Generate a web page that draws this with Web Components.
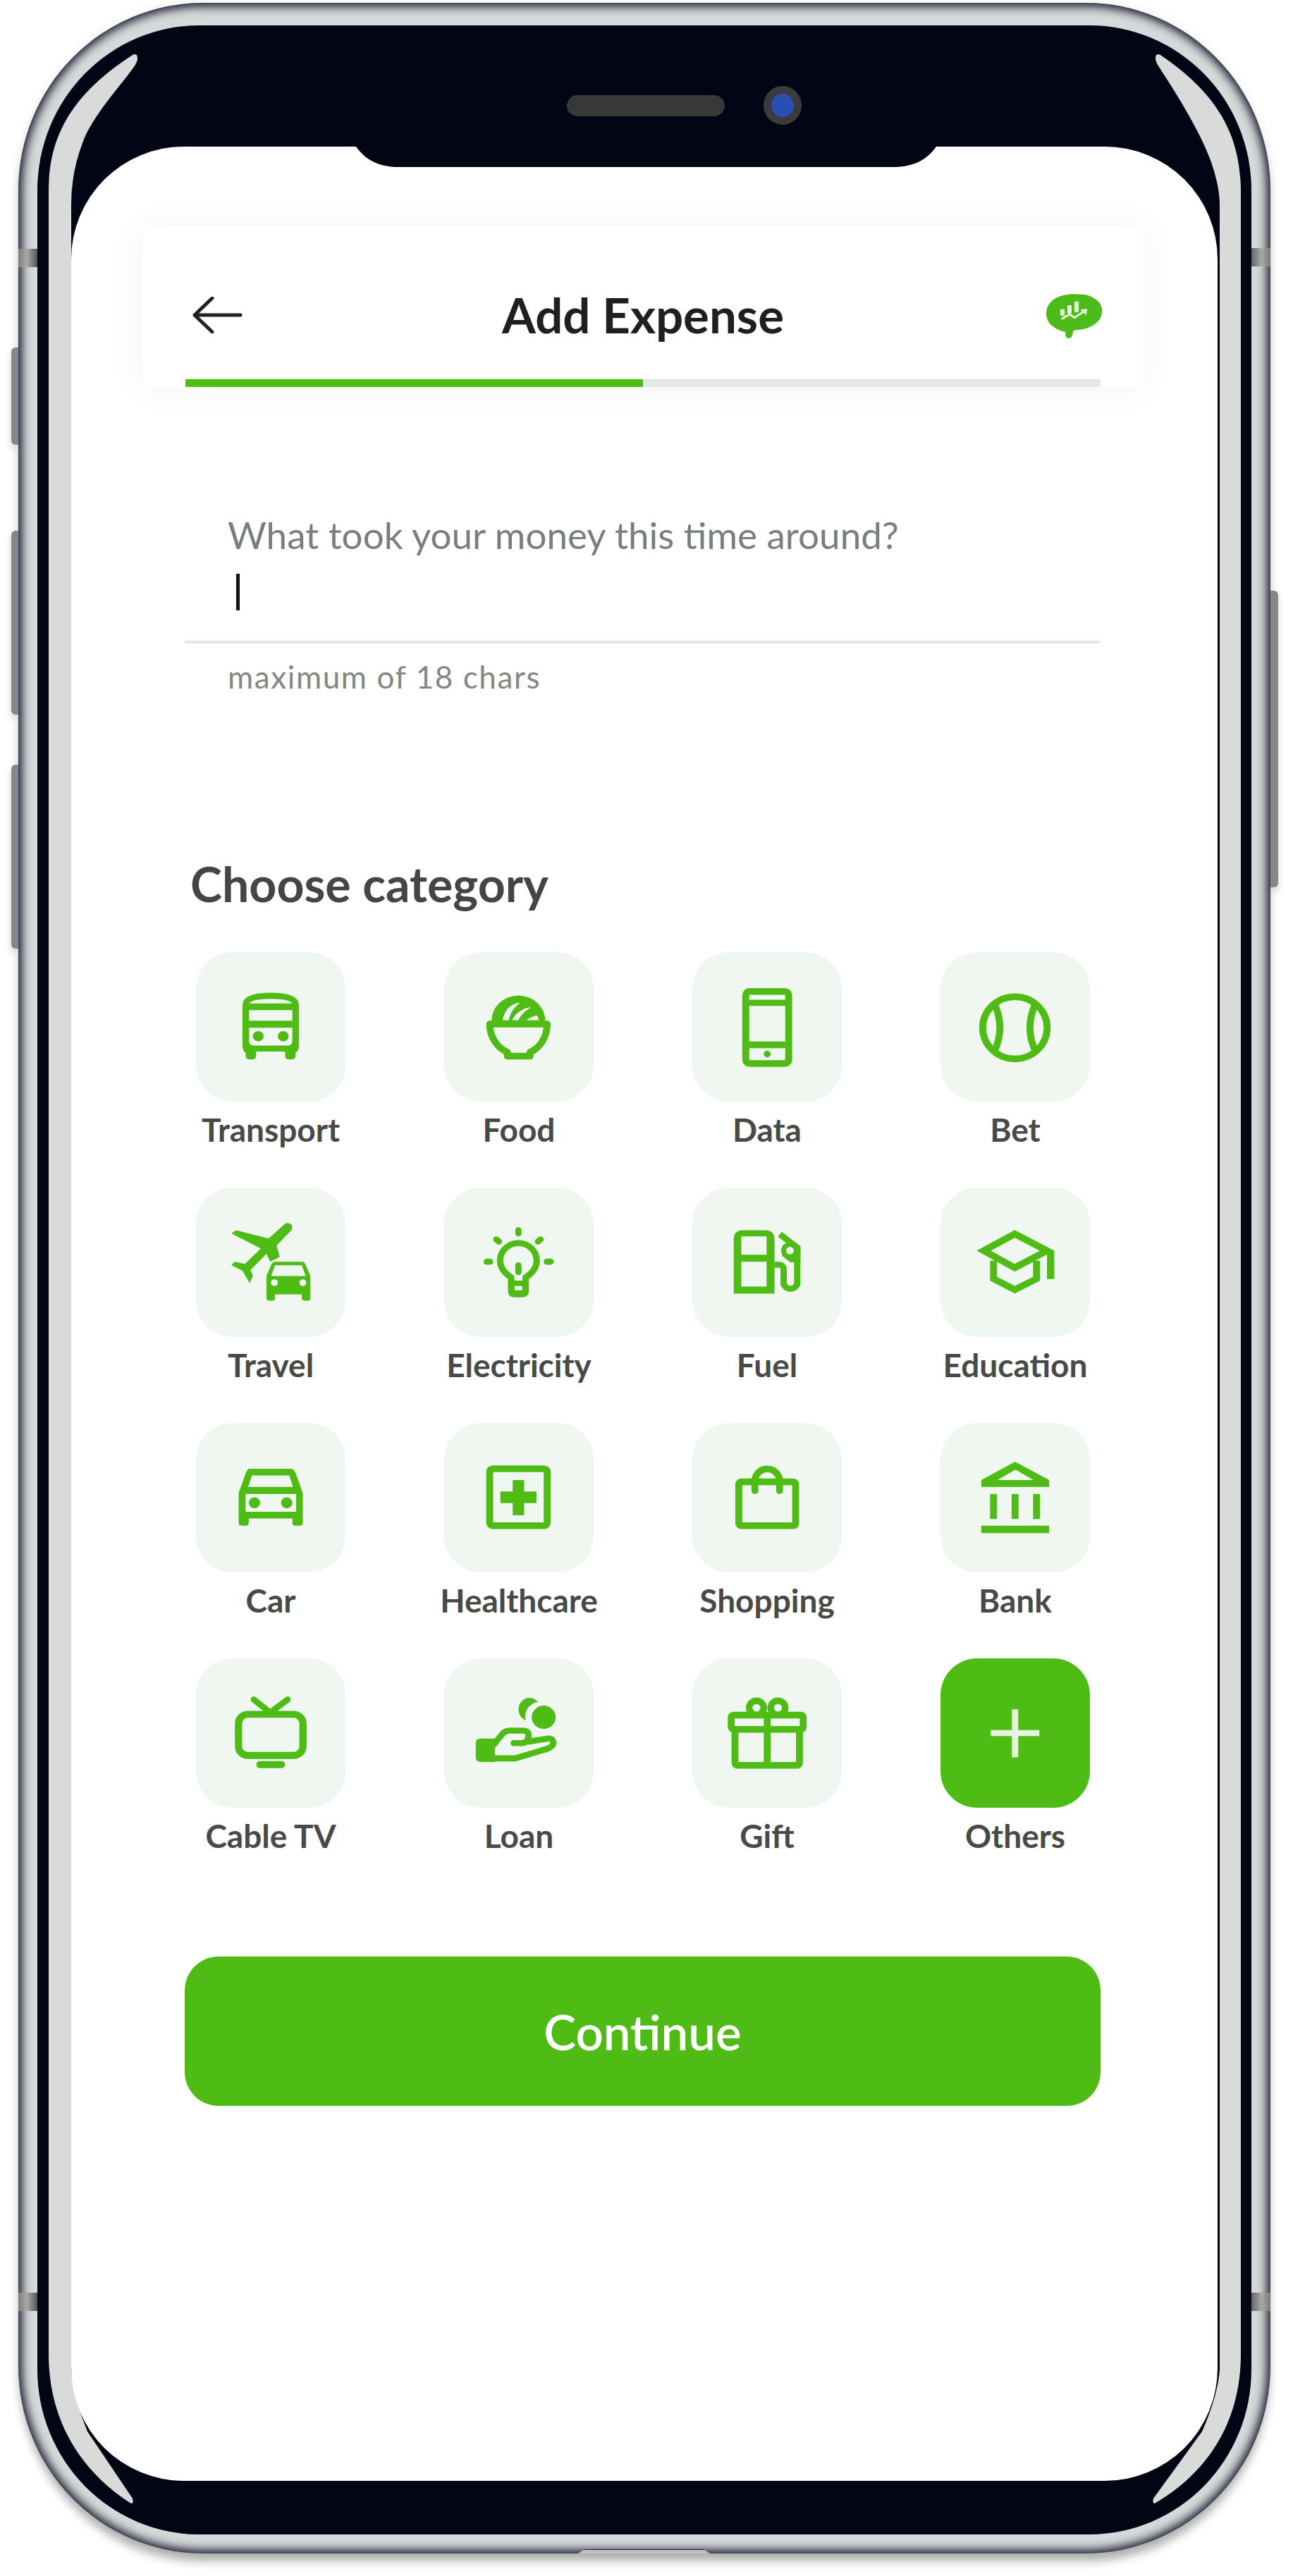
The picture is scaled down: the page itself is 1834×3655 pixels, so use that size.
<!DOCTYPE html>
<html>
<head>
<meta charset="utf-8">
<title>Add Expense</title>
<style>
  html, body { margin: 0; padding: 0; background: #fff; }
  body { width: 1834px; height: 3655px; overflow: hidden; font-family: Lato, "Open Sans", sans-serif; }
</style>
</head>
<body>
<phone-frame>
  <app-header title="Add Expense"></app-header>
  <expense-input placeholder="What took your money this time around?" hint="maximum of 18 chars"></expense-input>
  <category-grid heading="Choose category">
    <category-tile icon="bus">Transport</category-tile>
    <category-tile icon="food">Food</category-tile>
    <category-tile icon="phone">Data</category-tile>
    <category-tile icon="ball">Bet</category-tile>
    <category-tile icon="travel">Travel</category-tile>
    <category-tile icon="bulb">Electricity</category-tile>
    <category-tile icon="fuel">Fuel</category-tile>
    <category-tile icon="cap">Education</category-tile>
    <category-tile icon="car">Car</category-tile>
    <category-tile icon="health">Healthcare</category-tile>
    <category-tile icon="bag">Shopping</category-tile>
    <category-tile icon="bank">Bank</category-tile>
    <category-tile icon="tv">Cable TV</category-tile>
    <category-tile icon="loan">Loan</category-tile>
    <category-tile icon="gift">Gift</category-tile>
    <category-tile icon="plus" active>Others</category-tile>
  </category-grid>
  <primary-button>Continue</primary-button>
</phone-frame>

<script>
const GREEN = '#4fbc16';
const TILE_BG = '#f0f6f0';

// icons are traced in the zoomed crop's units, tile = 473 x 490
const ICONS = {
  bus: `<path fill-rule="evenodd" fill="${GREEN}" d="M147 175Q147 133 236 133Q326 133 326 175V305Q326 323 315 330V340Q315 352 303 352H294Q282 352 282 340V326H190V340Q190 352 178 352H169Q157 352 157 340V330Q147 323 147 305ZM168 168Q180 153 236 153Q295 153 305 168ZM168 190H305V225H168ZM168 248H305V290Q305 306 290 306H183Q168 306 168 290Z"/>
    <circle cx="197" cy="276" r="17" fill="${GREEN}"/><circle cx="276" cy="276" r="17" fill="${GREEN}"/>`,
  food: `<path fill="${GREEN}" d="M150 226A85 84 0 0 1 320 226Z"/>
    <path fill="${TILE_BG}" d="M185 223C190 190 212 168 240 166C222 180 208 200 205 223ZM215 223C225 200 250 182 275 180C258 192 242 205 235 223ZM260 223C270 215 285 208 295 208L300 223Z"/>
    <path fill="none" stroke="${GREEN}" stroke-width="22" stroke-linejoin="round" d="M144 236H326C326 280 302 315 272 328V341H200V328C170 315 144 280 144 236Z"/>`,
  phone: `<rect x="169" y="129" width="136" height="236" rx="12" fill="none" stroke="${GREEN}" stroke-width="22"/>
    <path fill="${GREEN}" d="M160 156H312V176H160ZM160 293H312V315H160Z"/><circle cx="237" cy="334" r="11" fill="${GREEN}"/>`,
  ball: `<circle cx="235.5" cy="248" r="102" fill="none" stroke="${GREEN}" stroke-width="22"/>
    <path fill="none" stroke="${GREEN}" stroke-width="22" d="M170 168Q206 248 170 326M301 168Q265 248 301 326"/>`,
  travel: `<g transform="translate(-85 -845)">
    <path fill="${GREEN}" d="M362 968Q375 955 386 966Q395 977 382 990L340 1035L350 1072L320 1088L308 1062L258 1115L265 1135L255 1158L232 1118L197 1100L207 1088L240 1095L290 1045L197 995L212 985L315 1012Z"/>
    <path fill="${GREEN}" fill-rule="evenodd" d="M335 1088H420Q428 1088 432 1098L447 1135V1208Q447 1216 440 1216H428Q420 1216 420 1208V1195H335V1208Q335 1216 327 1216H316Q308 1216 308 1208V1135L323 1098Q327 1088 335 1088ZM335 1100L323 1135H432L420 1100Z"/>
    <circle cx="333" cy="1157" r="11" fill="${TILE_BG}"/><circle cx="423" cy="1157" r="11" fill="${TILE_BG}"/></g>`,
  bulb: `<g transform="translate(-875 -845)" fill="none" stroke="${GREEN}" stroke-width="20" stroke-linecap="round">
    <path d="M1087 1160V1140C1065 1125 1052 1108 1052 1085A58 58 0 0 1 1168 1085C1168 1108 1155 1125 1133 1140V1160"/>
    <path d="M1110 985V995M1040 1015L1048 1022M1180 1015L1172 1022M1010 1088H1020M1200 1088H1212M1110 1100V1122"/>
    <path stroke="none" fill="${GREEN}" fill-rule="evenodd" d="M1077 1150H1143V1185Q1143 1205 1123 1205H1097Q1077 1205 1077 1185ZM1098 1168V1182H1122V1168Z"/></g>`,
  fuel: `<g transform="translate(-95 -845)">
    <path fill="${GREEN}" fill-rule="evenodd" d="M226 1193V1015Q226 985 256 985H325Q355 985 355 1015V1193ZM250 1005V1065H330V1005ZM250 1088V1170H330V1088Z"/>
    <path fill="none" stroke="${GREEN}" stroke-width="20" d="M355 1098H368Q384 1098 384 1114V1162A23 23 0 0 0 427 1162V1042L372 998"/>
    <circle cx="404" cy="1052" r="20" fill="${TILE_BG}" stroke="${GREEN}" stroke-width="16"/>
    <path fill="${GREEN}" d="M378 1068L437 1040V1090H405Z"/><circle cx="404" cy="1052" r="12" fill="${TILE_BG}"/></g>`,
  cap: `<g transform="translate(-885 -845)" fill="none" stroke="${GREEN}" stroke-width="22">
    <path d="M1120 997L1022 1052L1120 1108L1222 1052Z"/><path d="M1053 1085V1144L1120 1180L1189 1144V1085"/>
    <path stroke="none" fill="${GREEN}" d="M1222 1052L1245 1052V1145H1222Z"/></g>`,
  car: `<g transform="translate(-85 -45)">
    <path fill="${GREEN}" fill-rule="evenodd" d="M255 195H385Q395 195 400 208L423 275V372Q423 382 413 382H400Q390 382 390 372V358H252V372Q252 382 242 382H230Q220 382 220 372V275L243 208Q248 195 255 195ZM262 217L250 255H392L380 217ZM242 278V336H402V278Z"/>
    <circle cx="270" cy="307" r="18" fill="${GREEN}"/><circle cx="372" cy="307" r="18" fill="${GREEN}"/></g>`,
  health: `<g transform="translate(-875 -45)"><rect x="1019" y="195" width="182" height="187" rx="10" fill="none" stroke="${GREEN}" stroke-width="22"/>
    <path fill="${GREEN}" d="M1092 232H1128V270H1167V308H1128V348H1092V308H1053V270H1092Z"/></g>`,
  bag: `<g transform="translate(-95 -45)" fill="none" stroke="${GREEN}" stroke-width="22"><rect x="242" y="238" width="180" height="144" rx="8"/>
    <path stroke-linecap="round" d="M293 267V235A39 39 0 0 1 371 235V267"/></g>`,
  bank: `<g transform="translate(-885 -45)" fill="${GREEN}"><path fill-rule="evenodd" d="M1121 172L1229 232V255H1014V232ZM1122 198L1065 232H1180Z"/>
    <path d="M1042 278H1064V360H1042ZM1110 278H1132V360H1110ZM1178 278H1200V360H1178ZM1014 382H1229V406H1014Z"/></g>`,
  tv: `<g transform="translate(-85 -815)"><rect x="219.500" y="998.500" width="204" height="135" rx="30" fill="none" stroke="${GREEN}" stroke-width="23"/>
    <path fill="none" stroke="${GREEN}" stroke-width="20" stroke-linecap="round" d="M268 950L320 993L375 950"/><rect x="276" y="1152" width="91" height="23" rx="11" fill="${GREEN}"/></g>`,
  loan: `<g transform="translate(-875 -815)"><circle cx="1190" cy="1008" r="38" fill="${GREEN}"/>
    <path fill="${GREEN}" d="M1172 958A35 38 0 1 0 1133 1018A48 48 0 0 1 1172 958Z"/>
    <path fill="${GREEN}" d="M975 1092Q975 1078 990 1078H1036V1155H990Q975 1155 975 1140Z"/>
    <path fill="none" stroke="${GREEN}" stroke-width="20" stroke-linecap="round" stroke-linejoin="round" d="M1032 1098L1060 1062Q1068 1052 1085 1052H1125Q1142 1052 1142 1068Q1142 1090 1122 1093H1095M1142 1088L1205 1078Q1222 1078 1220 1095Q1218 1105 1200 1112L1100 1143H1032"/></g>`,
  gift: `<g transform="translate(-95 -813)" fill="none" stroke="${GREEN}" stroke-width="22"><rect x="218" y="999" width="228" height="47" rx="8"/>
    <path d="M230 1050V1155Q230 1164 240 1164H424Q434 1164 434 1155V1050"/><path d="M332 1000V1170"/>
    <circle cx="298" cy="975" r="23" stroke-width="21"/><circle cx="366" cy="975" r="23" stroke-width="21"/></g>`,
  plus: `<g transform="translate(-885 -813)"><path fill="#e8f3df" d="M1111 980H1131V1048H1198V1068H1131V1137H1111V1068H1044V1048H1111Z"/></g>`
};

class PhoneFrame extends HTMLElement {
  constructor() {
    super();
    this.attachShadow({ mode: 'open' });
  }
  connectedCallback() {
    this.shadowRoot.innerHTML = `
      <style>
      :host{display:block;position:relative;box-sizing:border-box;width:1776px;height:3619px;margin:4px 0 0 26px}
      .frame{box-sizing:border-box;height:100%;padding:32px 27px 27px;background:#d6d9d9;border-radius:262px/266px;
        box-shadow:inset 0 0 14px 5px #14162a,0 14px 14px -3px rgba(0,0,0,.3),0 0 18px rgba(30,40,90,.06)}
      .bezel{position:relative;box-sizing:border-box;height:100%;display:flex;flex-direction:column;padding:86px 48px 76px;background:#020514;border-radius:230px/234px}
      .glare{position:absolute;left:-27px;top:-32px;width:1776px;height:3619px}
      .sensors{position:relative;display:flex;align-items:center;gap:55px;height:55px;margin-bottom:31px;padding-left:703px}
      .speaker{width:224px;height:30px;border-radius:15px;background:#383838}
      .camera{width:54px;height:55px;border-radius:50%;box-sizing:border-box;border:11px solid #3b3b3e;background:#2a4fb2}
      .screen{position:relative;flex:1;background:#fff;border-radius:160px;overflow:hidden;display:flex;flex-direction:column;align-items:flex-start}
      .notch{position:absolute;left:404px;top:0;width:823px;height:29px}
      .tab{position:absolute;left:794px;bottom:0;width:187px;height:6px;background:linear-gradient(#232534 0 1px,#bfc0bd 1px);clip-path:polygon(0 100%,5% 0,95% 0,100% 100%)}
      .side{position:absolute;background:#85878a}
      .side.l{left:-10px;width:10px;border-radius:6px 0 0 6px;box-shadow:-2px 6px 8px rgba(0,0,0,.12)}
      .side.r{left:1776px;width:11px;border-radius:0 6px 6px 0;box-shadow:2px 6px 8px rgba(0,0,0,.12)}
      .strip{position:absolute;height:26px;width:27px}
      .strip.l{left:0;background:linear-gradient(90deg,#7d7d7d,#a9a9a9 45%,#555)}
      .strip.r{left:1749px;background:linear-gradient(90deg,#666,#a9a9a9 55%,#777)}
      </style>
      <div class="side l" style="top:489px;height:138px"></div>
      <div class="side l" style="top:749px;height:261px"></div>
      <div class="side l" style="top:1081px;height:261px"></div>
      <div class="side r" style="top:834px;height:421px"></div>
      <div class="frame">
        <div class="bezel">
          <svg class="glare" viewBox="26 4 1776 3619">
            <path fill="#d9dada" d="M194 78Q197 84 192 92C176 116 130 165 117 203Q101 245 101 290V3363Q104 3400 124 3450L188 3545Q190 3552 186 3552C120 3510 69 3440 69 3340V272C69 195 100 135 188 78Q191 76 194 78Z"/>
            <path fill="#d9dada" d="M1640 78Q1637 84 1642 92C1660 120 1700 180 1718 230Q1730 265 1730 290V3363Q1727 3400 1705 3450L1636 3545Q1634 3552 1638 3552C1710 3510 1760 3440 1760 3340V272C1760 195 1730 135 1646 78Q1643 76 1640 78Z"/>
          </svg>
          <div class="sensors"><div class="speaker"></div><div class="camera"></div></div>
          <div class="screen">
            <slot></slot>
            <svg class="notch" viewBox="0 0 823 29"><path fill="#020514" d="M0 0C14 20 34 29 61 29H762C789 29 809 20 823 0Z"/></svg>
          </div>
        </div>
      </div>
      <div class="strip l" style="top:349px"></div>
      <div class="strip r" style="top:348px"></div>
      <div class="strip l" style="top:3249px"></div>
      <div class="strip r" style="top:3249px"></div>
      <div class="tab"></div>
    `;
  }
}

class AppHeader extends HTMLElement {
  constructor() {
    super();
    this.attachShadow({ mode: 'open' });
  }
  connectedCallback() {
    this.shadowRoot.innerHTML = `
      <style>
      :host{display:block;box-sizing:border-box;width:1420px;margin:113px 0 0 101px;padding:35px 61px 0;background:#fff;box-shadow:0 0 50px rgba(0,0,0,.05)}
      .row{display:grid;grid-template-columns:1fr auto 1fr;align-items:center;height:182px}
      .back{display:block;width:72px;height:52px;margin-left:10px}
      h1{margin:0;font:700 69px/80px Lato,sans-serif;color:#1f1f1f;white-space:nowrap}
      .logo{display:block;justify-self:end;width:110px;height:90px;margin-right:-18px}
      .bar{display:flex;height:11px;background:#e1e9e2}
      .bar i{display:block;width:50%;background:${GREEN}}
      </style>
      <div class="row">
        <svg class="back" viewBox="0 0 72 52" fill="none" stroke="#222" stroke-width="5" stroke-linecap="round" stroke-linejoin="round"><path d="M68 26H3M28 2L3 26L28 50"/></svg>
        <h1>${this.getAttribute('title')}</h1>
        <svg class="logo" viewBox="0 0 330 270">
          <path fill="#4dbb1a" d="M128 208C124 218 126 234 142 234C158 232 156 214 162 200C190 198 218 194 242 180C264 168 282 148 282 120C284 95 270 76 252 66C234 52 212 46 185 47C150 43 115 49 92 60C68 70 47 92 45 125C44 148 55 170 72 182C88 196 108 203 128 208Z"/>
          <path fill="#e6f5da" d="M105 110H123V138H105ZM135 93H153V128H135ZM165 77H183V122H165Z"/>
          <path fill="none" stroke="#e6f5da" stroke-width="9" d="M110 152L145 132L165 146L208 118"/>
          <path fill="#e6f5da" d="M190 112L220 108L214 136Z"/>
        </svg>
      </div>
      <div class="bar"><i></i></div>
    `;
  }
}

class ExpenseInput extends HTMLElement {
  constructor() {
    super();
    this.attachShadow({ mode: 'open' });
  }
  connectedCallback() {
    this.shadowRoot.innerHTML = `
      <style>
      :host{display:block;box-sizing:border-box;width:1299px;margin:178px 0 0 161px;font-family:Lato,sans-serif}
      .ph{padding-left:61px;font-size:53px;line-height:64px;color:#78807a;white-space:nowrap}
      .caret{width:5px;height:52px;margin:23px 0 43px 73px;background:#111}
      .rule{height:4px;background:#e3e8e5}
      .hint{margin-top:22px;padding-left:61px;font-size:44px;line-height:50px;letter-spacing:1.6px;color:#828882}
      </style>
      <div class="ph">${this.getAttribute('placeholder')}</div>
      <div class="caret"></div>
      <div class="rule"></div>
      <div class="hint">${this.getAttribute('hint')}</div>
    `;
  }
}

class CategoryGrid extends HTMLElement {
  constructor() {
    super();
    this.attachShadow({ mode: 'open' });
  }
  connectedCallback() {
    this.shadowRoot.innerHTML = `
      <style>
      :host{display:block;margin:229px 0 0 169px;font-family:Lato,sans-serif}
      h2{margin:0 0 57px;font:700 68px/80px Lato,sans-serif;color:#444643;white-space:nowrap}
      .grid{display:grid;grid-template-columns:repeat(4,212px);column-gap:140px;row-gap:55px;margin-left:8px}
      </style>
      <h2>${this.getAttribute('heading')}</h2>
      <div class="grid"><slot></slot></div>
    `;
  }
}

class CategoryTile extends HTMLElement {
  constructor() {
    super();
    this.attachShadow({ mode: 'open' });
  }
  connectedCallback() {
    const icon = ICONS[this.getAttribute('icon')] || '';
    this.shadowRoot.innerHTML = `
      <style>
      :host{display:flex;flex-direction:column;align-items:center;width:212px}
      .box{width:212px;height:212px;border-radius:52px;background:${TILE_BG}}
      :host([active]) .box{background:${GREEN}}
      svg{display:block;width:212px;height:212px}
      .label{margin-top:13px;font:700 46px/54px Lato,sans-serif;color:#484a48;white-space:nowrap}
      </style>
      <div class="box"><svg viewBox="0 0 473 490" preserveAspectRatio="none">${icon}</svg></div>
      <div class="label"><slot></slot></div>
    `;
  }
}

class PrimaryButton extends HTMLElement {
  constructor() {
    super();
    this.attachShadow({ mode: 'open' });
  }
  connectedCallback() {
    this.shadowRoot.innerHTML = `
      <style>
      :host{display:flex;align-items:center;justify-content:center;box-sizing:border-box;width:1299px;height:212px;margin:144px 0 0 161px;border-radius:48px;background:${GREEN};color:#fff;font:600 69px/1 Lato,sans-serif}
      </style>
      <slot></slot>
    `;
  }
}

customElements.define('phone-frame', PhoneFrame);
customElements.define('app-header', AppHeader);
customElements.define('expense-input', ExpenseInput);
customElements.define('category-grid', CategoryGrid);
customElements.define('category-tile', CategoryTile);
customElements.define('primary-button', PrimaryButton);
</script>
</body>
</html>
